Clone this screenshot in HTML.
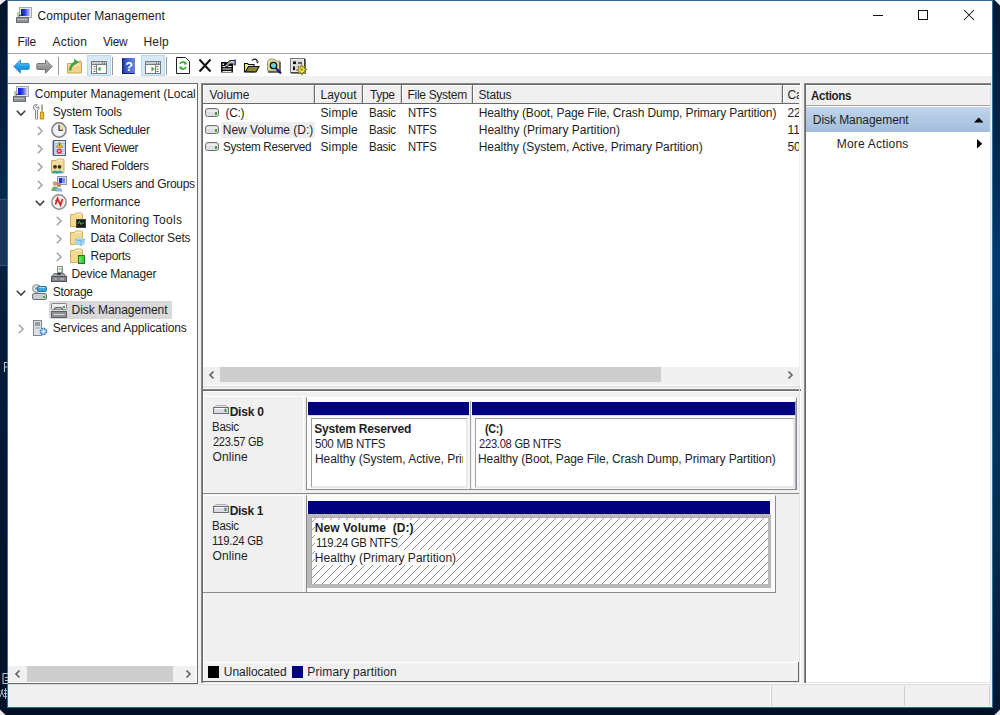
<!DOCTYPE html>
<html><head><meta charset="utf-8"><style>*{margin:0;padding:0;box-sizing:border-box}
html,body{width:1000px;height:715px;overflow:hidden;background:#011127;font-family:"Liberation Sans",sans-serif;font-size:12px;color:#000}
.a{position:absolute}
svg.a{overflow:visible}
.t{position:absolute;white-space:nowrap;line-height:14px;letter-spacing:-0.3px;color:#1e1e1e}
.b{font-weight:bold}
</style></head><body>
<div class="a" style="left:7px;top:0px;width:986px;height:708px;background:#fff;border:1px solid #2c6e9c"></div>
<svg class="a" style="left:0px;top:0px" width="7" height="6" viewBox="0 0 7 6"><path d="M0 0h6L0 5z" fill="#e8edf2"/></svg>
<svg class="a" style="left:993px;top:0px" width="7" height="7" viewBox="0 0 7 7"><path d="M1.5 0H7v5.5z" fill="#e8edf2"/></svg>
<svg class="a" style="left:993px;top:708px" width="7" height="7" viewBox="0 0 7 7"><path d="M7 1.5V7H1.5z" fill="#e8edf2"/></svg>
<svg class="a" style="left:0px;top:708px" width="7" height="7" viewBox="0 0 7 7"><path d="M0 1.5L5.5 7H0z" fill="#e8edf2"/></svg>
<svg class="a" style="left:16px;top:7px" width="16" height="16" viewBox="0 0 16 16"><defs><linearGradient id="scr" x1="0" x2="1"><stop offset="0" stop-color="#0a1ccc"/><stop offset="0.45" stop-color="#2a40e0"/><stop offset="1" stop-color="#c8ccf4"/></linearGradient></defs><rect x="3.5" y="0.5" width="12" height="10" fill="#e4e4e8" stroke="#a8a8ac"/><rect x="5" y="2" width="9" height="7" fill="url(#scr)"/><path d="M2 9.5c1-1.5 3-1.5 5-1" stroke="#222" stroke-width="0.9" fill="none"/><rect x="1" y="5" width="2" height="4.5" fill="#a6d49a"/><rect x="0.5" y="10.5" width="12" height="5" fill="#8f9398" stroke="#6c7075"/><path d="M2 12.5h9" stroke="#d0d2d4" stroke-width="1" stroke-dasharray="1.5 0.8"/></svg>
<div class="t" style="left:37.50px;top:9px;letter-spacing:0.072px;color:#1a1a1a">Computer Management</div>
<div class="a" style="left:873px;top:15px;width:10px;height:1px;background:#111"></div>
<div class="a" style="left:918px;top:10px;width:10px;height:10px;border:1px solid #111"></div>
<svg class="a" style="left:963px;top:9px" width="12" height="12" viewBox="0 0 12 12"><path d="M1 1L11 11M11 1L1 11" stroke="#111" stroke-width="1.05"/></svg>
<div class="t" style="left:17.50px;top:35px;letter-spacing:-0.200px;">File</div>
<div class="t" style="left:52.50px;top:35px;letter-spacing:0.200px;">Action</div>
<div class="t" style="left:103.00px;top:35px;letter-spacing:-0.300px;transform:scaleX(0.9841);transform-origin:0px 0;">View</div>
<div class="t" style="left:143.40px;top:35px;letter-spacing:0.200px;">Help</div>
<div class="a" style="left:8px;top:53px;width:984px;height:1px;background:#a9a9a9"></div>
<div class="a" style="left:87px;top:55px;width:24px;height:21px;background:#d6e9f8;border:1px solid #b5d8f3"></div>
<div class="a" style="left:141px;top:55px;width:24px;height:21px;background:#d6e9f8;border:1px solid #b5d8f3"></div>
<div class="a" style="left:58px;top:57px;width:1px;height:18px;background:#9a9a9a"></div>
<div class="a" style="left:112px;top:57px;width:1px;height:18px;background:#9a9a9a"></div>
<div class="a" style="left:166px;top:57px;width:1px;height:18px;background:#9a9a9a"></div>
<svg class="a" style="left:13px;top:59px" width="17" height="15" viewBox="0 0 17 15"><defs><linearGradient id="ba" x1="0" y1="0" x2="0" y2="1"><stop offset="0" stop-color="#8ad8fa"/><stop offset="0.5" stop-color="#1e9ee8"/><stop offset="1" stop-color="#1580d0"/></linearGradient></defs><path d="M0.8 7.5L7.5 0.8v3.7h7.7a1 1 0 0 1 1 1v4a1 1 0 0 1-1 1H7.5v3.7z" fill="url(#ba)" stroke="#3a8ad0" stroke-width="0.9"/></svg>
<svg class="a" style="left:36px;top:59px" width="17" height="15" viewBox="0 0 17 15"><defs><linearGradient id="fa" x1="0" y1="0" x2="0" y2="1"><stop offset="0" stop-color="#c8c8c8"/><stop offset="0.5" stop-color="#9a9a9a"/><stop offset="1" stop-color="#858585"/></linearGradient></defs><path d="M16.2 7.5L9.5 0.8v3.7H1.8a1 1 0 0 0-1 1v4a1 1 0 0 0 1 1h7.7v3.7z" fill="url(#fa)" stroke="#6a6a6a" stroke-width="0.9"/></svg>
<svg class="a" style="left:67px;top:58px" width="16" height="17" viewBox="0 0 16 17"><path d="M0.5 5.5h5l1.5-1.5h7.5v11h-14z" fill="#f4d48a" stroke="#c9a650"/><path d="M1 7h13" stroke="#fff3c8" stroke-width="0.8"/><path d="M3 12.5c0.5-4 2.5-7 6-8" stroke="#3fa63f" stroke-width="2.4" fill="none"/><path d="M7 0.8l5 3.2-4.5 3z" fill="#3fa63f"/><path d="M12 3.5l2-1" stroke="#8a8a8a" stroke-width="0.8"/></svg>
<svg class="a" style="left:91px;top:61px" width="16" height="13" viewBox="0 0 16 13"><rect x="0.5" y="0.5" width="15" height="12" fill="#fff" stroke="#7a7a7a"/><rect x="1" y="1" width="14" height="2.5" fill="#c8c8c8"/><path d="M11 2.2h1M13 2.2h1" stroke="#555" stroke-width="1"/><path d="M1 3.5h14" stroke="#7a7a7a"/><path d="M2.5 5.5h2M2.5 8h2M2.5 10.5h2" stroke="#666"/><path d="M5.5 4v9" stroke="#7a7a7a"/><path d="M9.5 5.5v5l-3-2.5z" fill="#3aaa3a"/></svg>
<svg class="a" style="left:122px;top:58px" width="13" height="16" viewBox="0 0 13 16"><defs><linearGradient id="hg" x1="0" x2="1"><stop offset="0" stop-color="#1c2f9a"/><stop offset="0.3" stop-color="#3a56c8"/><stop offset="1" stop-color="#6a84e0"/></linearGradient></defs><rect x="0" y="0" width="13" height="16" fill="url(#hg)"/><path d="M0.5 0.5v15h12" stroke="#142070" fill="none"/><text x="7" y="12.5" font-size="12.5" font-family="Liberation Sans" fill="#fff" text-anchor="middle" font-weight="bold">?</text></svg>
<svg class="a" style="left:145px;top:61px" width="16" height="13" viewBox="0 0 16 13"><rect x="0.5" y="0.5" width="15" height="12" fill="#fff" stroke="#7a7a7a"/><rect x="1" y="1" width="14" height="2.5" fill="#c8c8c8"/><path d="M11 2.2h1M13 2.2h1" stroke="#555" stroke-width="1"/><path d="M1 3.5h14" stroke="#7a7a7a"/><path d="M11.5 5.5h2M11.5 8h2M11.5 10.5h2" stroke="#666"/><path d="M10.5 4v9" stroke="#7a7a7a"/><path d="M6.5 5.5v5l3-2.5z" fill="#3aaa3a"/></svg>
<svg class="a" style="left:176px;top:57px" width="14" height="17" viewBox="0 0 14 17"><path d="M0.5 0.5h9l4 4v12h-13z" fill="#fff" stroke="#222"/><path d="M4 7a3 3 0 0 1 5.5-0.5" stroke="#2eaa2e" stroke-width="1.6" fill="none"/><path d="M10.5 4.5v3h-3z" fill="#2eaa2e"/><path d="M10 10a3 3 0 0 1-5.5 0.5" stroke="#2eaa2e" stroke-width="1.6" fill="none"/><path d="M3.5 12.5v-3h3z" fill="#2eaa2e"/></svg>
<svg class="a" style="left:198px;top:58px" width="14" height="15" viewBox="0 0 14 15"><path d="M1.5 1.5L12.5 13.5M12.5 1.5L1.5 13.5" stroke="#111" stroke-width="2"/></svg>
<svg class="a" style="left:220px;top:58px" width="17" height="15" viewBox="0 0 17 15"><rect x="1" y="4" width="12" height="10.5" fill="#111"/><path d="M2.5 8.5h9M2.5 11h9M2.5 13.5h9" stroke="#e8e8e8" stroke-width="1.2"/><rect x="2.5" y="5.5" width="1.5" height="1.5" fill="#ddd"/><path d="M5 7.5L9.5 2.5h5.5v3.5H9.5L7 9z" fill="#c8c8c8" stroke="#111" stroke-width="0.9"/><path d="M6.5 7l4-4M8 8l3.5-3" stroke="#111" stroke-width="0.6"/><path d="M15 1.5v6" stroke="#3030a0" stroke-width="1.6"/><path d="M14.3 3v3" stroke="#9a9af0" stroke-width="0.8"/></svg>
<svg class="a" style="left:243px;top:58px" width="17" height="15" viewBox="0 0 17 15"><path d="M1.5 5.5h3l1 1h5.5v7.5h-9.5z" fill="#f0f080" stroke="#111" stroke-width="1.1"/><path d="M2.5 13.5l3-5h10.5l-3 5.5z" fill="#8a8a28" stroke="#111" stroke-width="1.1"/><path d="M9 2.5c1.5-2 4-2 5.5 0.5" stroke="#111" stroke-width="1.2" fill="none"/><path d="M13 3.5h3l-1.5 2z" fill="#111"/></svg>
<svg class="a" style="left:267px;top:58px" width="16" height="17" viewBox="0 0 16 17"><path d="M0.5 3.5l2-2.5h5l1 2h4.5v10h-12.5z" fill="#dcdc96" stroke="#8a8a6a" stroke-width="0.8"/><path d="M1 14h12.5" stroke="#111" stroke-width="1.2"/><path d="M13 4v10" stroke="#111" stroke-width="1"/><circle cx="6.5" cy="7.5" r="3.2" fill="#5fd6e0" stroke="#111" stroke-width="1.3"/><path d="M8.8 10l5.2 5.5" stroke="#1a1a80" stroke-width="2.2"/></svg>
<svg class="a" style="left:290px;top:58px" width="17" height="16" viewBox="0 0 17 16"><rect x="0.5" y="0.5" width="14" height="14" fill="#fff" stroke="#777"/><rect x="1.5" y="1.5" width="12" height="12" fill="#d8d8d8"/><rect x="3" y="3.5" width="3" height="2.5" fill="#111"/><path d="M8 5h4" stroke="#111" stroke-width="1.2"/><rect x="3" y="8.5" width="2" height="3.5" fill="#111"/><path d="M1 15h14V1" stroke="#111" stroke-width="1.2" fill="none"/><g transform="translate(11.5 11.5)"><path d="M0-5l1.2 2.6 2.6-1.2-0.9 2.7 2.7 0.9-2.6 1.2 1.2 2.6-2.7-0.9-1 2.8-1.2-2.6-2.6 1.2 0.9-2.7-2.7-0.9 2.6-1.2-1.2-2.6 2.7 0.9z" fill="#f0e040" stroke="#5a5a10" stroke-width="0.7"/><circle r="1.3" fill="#9a9a30"/></g></svg>
<div class="a" style="left:8px;top:76px;width:984px;height:7px;background:#f0f0f0"></div>
<div class="a" style="left:8px;top:83px;width:984px;height:624px;background:#f0f0f0"></div>
<div class="a" style="left:8px;top:83px;width:190px;height:601px;background:#fff"></div>
<div class="a" style="left:8px;top:83px;width:190px;height:1px;background:#696969"></div>
<div class="a" style="left:197px;top:83px;width:1px;height:601px;background:#696969"></div>
<div class="a" style="left:196px;top:84px;width:1px;height:598px;background:#fff"></div>
<div class="a" style="left:8px;top:683px;width:190px;height:1px;background:#696969"></div>
<div class="a" style="left:198px;top:83px;width:3px;height:601px;background:#f0f0f0"></div>
<div class="a" style="left:8px;top:666px;width:188px;height:16px;background:#f0f0f0"></div>
<div class="a" style="left:27px;top:666px;width:146px;height:16px;background:#cdcdcd"></div>
<svg class="a" style="left:13px;top:669px" width="10" height="10" viewBox="0 0 10 10"><path d="M6.5 1.5L3 5l3.5 3.5" stroke="#606060" stroke-width="1.6" fill="none"/></svg>
<svg class="a" style="left:183px;top:669px" width="10" height="10" viewBox="0 0 10 10"><path d="M3.5 1.5L7 5 3.5 8.5" stroke="#606060" stroke-width="1.6" fill="none"/></svg>
<div class="a" style="left:49px;top:301px;width:123px;height:18px;background:#d9d9d9"></div>
<svg class="a" style="left:13px;top:86px" width="16" height="16" viewBox="0 0 16 16"><defs><linearGradient id="scr" x1="0" x2="1"><stop offset="0" stop-color="#0a1ccc"/><stop offset="0.45" stop-color="#2a40e0"/><stop offset="1" stop-color="#c8ccf4"/></linearGradient></defs><rect x="3.5" y="0.5" width="12" height="10" fill="#e4e4e8" stroke="#a8a8ac"/><rect x="5" y="2" width="9" height="7" fill="url(#scr)"/><path d="M2 9.5c1-1.5 3-1.5 5-1" stroke="#222" stroke-width="0.9" fill="none"/><rect x="1" y="5" width="2" height="4.5" fill="#a6d49a"/><rect x="0.5" y="10.5" width="12" height="5" fill="#8f9398" stroke="#6c7075"/><path d="M2 12.5h9" stroke="#d0d2d4" stroke-width="1" stroke-dasharray="1.5 0.8"/></svg>
<div class="t" style="left:34.80px;top:87px;letter-spacing:-0.048px;">Computer Management (Local</div>
<svg class="a" style="left:16px;top:110px" width="10" height="6" viewBox="0 0 10 6"><path d="M0.8 0.8L5 5 9.2 0.8" stroke="#404040" stroke-width="1.6" fill="none"/></svg>
<svg class="a" style="left:32px;top:104px" width="16" height="16" viewBox="0 0 16 16"><path d="M1.5 3a2.8 2.8 0 0 1 3.5-2.6L3.6 2.6l1.2 1.3 2-1.2A2.8 2.8 0 0 1 5.5 6.2v8.3a1 1 0 0 1-2 0V6.2A2.8 2.8 0 0 1 1.5 3z" fill="#f0f0f0" stroke="#7a7a7a" stroke-width="0.9"/><path d="M10 0.5v7" stroke="#555" stroke-width="1"/><path d="M8.5 8h3l0.3 7h-3.6z" fill="#f2b21a" stroke="#a87a00" stroke-width="0.8"/><path d="M10 9v5" stroke="#ffd870" stroke-width="0.7"/></svg>
<div class="t" style="left:52.70px;top:105px;letter-spacing:-0.164px;">System Tools</div>
<svg class="a" style="left:37px;top:126px" width="6" height="10" viewBox="0 0 6 10"><path d="M0.8 0.8L5 5 0.8 9.2" stroke="#a6a6a6" stroke-width="1.6" fill="none"/></svg>
<svg class="a" style="left:51px;top:122px" width="16" height="16" viewBox="0 0 16 16"><circle cx="8" cy="8" r="7.2" fill="#dde2ea" stroke="#7c7c7c" stroke-width="1.4"/><circle cx="8" cy="8" r="5.7" fill="#eef1f6"/><path d="M8 2.5A5.5 5.5 0 0 1 13.5 8H8z" fill="#f2dca0"/><path d="M8 3v5.2h4" stroke="#222" stroke-width="1.1" fill="none"/></svg>
<div class="t" style="left:72.60px;top:123px;letter-spacing:-0.362px;">Task Scheduler</div>
<svg class="a" style="left:37px;top:144px" width="6" height="10" viewBox="0 0 6 10"><path d="M0.8 0.8L5 5 0.8 9.2" stroke="#a6a6a6" stroke-width="1.6" fill="none"/></svg>
<svg class="a" style="left:51px;top:140px" width="16" height="16" viewBox="0 0 16 16"><rect x="2.5" y="0.5" width="12" height="15" fill="#dbe3f2" stroke="#4f5f88"/><path d="M4 3.5h10M4 5.5h10M4 7.5h10M4 9.5h10M4 11.5h10M4 13.5h10" stroke="#9aaad0" stroke-width="0.7"/><path d="M1 2h2.5M1 4h2.5M1 6h2.5M1 8h2.5M1 10h2.5M1 12h2.5M1 14h2.5" stroke="#4f5f88" stroke-width="0.9"/><path d="M8.5 2l3 5h-6z" fill="#f4c81c" stroke="#a88400" stroke-width="0.6"/><path d="M8.5 3.5v2" stroke="#333" stroke-width="0.9"/><circle cx="8.3" cy="11" r="2.6" fill="#d8283c"/><path d="M7.2 9.9l2.2 2.2M9.4 9.9l-2.2 2.2" stroke="#fff" stroke-width="0.8"/></svg>
<div class="t" style="left:71.60px;top:141px;letter-spacing:-0.318px;">Event Viewer</div>
<svg class="a" style="left:37px;top:162px" width="6" height="10" viewBox="0 0 6 10"><path d="M0.8 0.8L5 5 0.8 9.2" stroke="#a6a6a6" stroke-width="1.6" fill="none"/></svg>
<svg class="a" style="left:51px;top:158px" width="16" height="16" viewBox="0 0 16 16"><path d="M0.5 2.5h5l1-1.5h5.5l1 1.5v12h-12.5z" fill="#f3dc9a" stroke="#c4a458" stroke-width="0.9"/><path d="M6 2.2h6" stroke="#fff5d8" stroke-width="0.8"/><circle cx="4" cy="8.8" r="1.9" fill="#3a3020"/><path d="M1 15.5a3 3 0 0 1 6 0z" fill="#2da87a"/><circle cx="8.5" cy="8.8" r="1.9" fill="#3a3020"/><path d="M5.5 15.5a3 3 0 0 1 6 0z" fill="#38a0b8"/></svg>
<div class="t" style="left:71.60px;top:159px;letter-spacing:-0.362px;">Shared Folders</div>
<svg class="a" style="left:37px;top:180px" width="6" height="10" viewBox="0 0 6 10"><path d="M0.8 0.8L5 5 0.8 9.2" stroke="#a6a6a6" stroke-width="1.6" fill="none"/></svg>
<svg class="a" style="left:51px;top:176px" width="16" height="16" viewBox="0 0 16 16"><rect x="6.5" y="0.5" width="9" height="8" fill="#d8dde6" stroke="#8f96a2"/><rect x="8" y="2" width="6" height="5" fill="#7a8ff0"/><path d="M8 2h3v5H8z" fill="#1f36c8"/><circle cx="4" cy="7.5" r="2.3" fill="#c99d72"/><path d="M0.5 14a3.5 3.5 0 0 1 7 0v1h-7z" fill="#6fb06a"/><circle cx="8" cy="9" r="2.3" fill="#b88b63"/><path d="M4.5 15.5a3.5 3.5 0 0 1 7 0z" fill="#8eb4d8"/></svg>
<div class="t" style="left:71.60px;top:177px;letter-spacing:-0.281px;">Local Users and Groups</div>
<svg class="a" style="left:35px;top:200px" width="10" height="6" viewBox="0 0 10 6"><path d="M0.8 0.8L5 5 9.2 0.8" stroke="#404040" stroke-width="1.6" fill="none"/></svg>
<svg class="a" style="left:51px;top:194px" width="16" height="16" viewBox="0 0 16 16"><circle cx="8" cy="8" r="7.2" fill="#f4f4f4" stroke="#8c8c8c" stroke-width="1.4"/><path d="M4.5 10.5L6.5 4.5 9.5 11 11.5 5" stroke="#d12b2b" stroke-width="1.8" fill="none"/><path d="M4 6.5h1M4 9h1" stroke="#555" stroke-width="0.7"/></svg>
<div class="t" style="left:71.60px;top:195px;letter-spacing:0.020px;">Performance</div>
<svg class="a" style="left:56px;top:216px" width="6" height="10" viewBox="0 0 6 10"><path d="M0.8 0.8L5 5 0.8 9.2" stroke="#a6a6a6" stroke-width="1.6" fill="none"/></svg>
<svg class="a" style="left:70px;top:212px" width="16" height="16" viewBox="0 0 16 16"><path d="M0.5 2.5h4l1-1.5h6l1 1v12.5h-12z" fill="#f6d98f" stroke="#c9a64f" stroke-width="0.9"/><path d="M5.5 2.2h6" stroke="#fff" stroke-width="0.8"/><rect x="6.5" y="7.5" width="9" height="8" fill="#1a1a1a" stroke="#444"/><path d="M8 12l1.5-2.5 1.5 3 1.5-1.5h1.5" stroke="#3ccf5a" stroke-width="0.9" fill="none"/></svg>
<div class="t" style="left:90.50px;top:213px;letter-spacing:0.287px;">Monitoring Tools</div>
<svg class="a" style="left:56px;top:234px" width="6" height="10" viewBox="0 0 6 10"><path d="M0.8 0.8L5 5 0.8 9.2" stroke="#a6a6a6" stroke-width="1.6" fill="none"/></svg>
<svg class="a" style="left:70px;top:230px" width="16" height="16" viewBox="0 0 16 16"><path d="M0.5 2.5h4l1-1.5h6l1 1v12.5h-12z" fill="#f6d98f" stroke="#c9a64f" stroke-width="0.9"/><path d="M5.5 2.2h6" stroke="#fff" stroke-width="0.8"/><path d="M5 9.5l4-2 6 1.5v5l-4 2-6-1.5z" fill="#a9d6ef"/><path d="M5 9.5l6 1.5 4-2M11 11v5" stroke="#5aa9d6" stroke-width="0.7" fill="none"/></svg>
<div class="t" style="left:90.50px;top:231px;letter-spacing:-0.183px;">Data Collector Sets</div>
<svg class="a" style="left:56px;top:252px" width="6" height="10" viewBox="0 0 6 10"><path d="M0.8 0.8L5 5 0.8 9.2" stroke="#a6a6a6" stroke-width="1.6" fill="none"/></svg>
<svg class="a" style="left:70px;top:248px" width="16" height="16" viewBox="0 0 16 16"><path d="M0.5 2.5h4l1-1.5h6l1 1v12.5h-12z" fill="#f6d98f" stroke="#c9a64f" stroke-width="0.9"/><path d="M5.5 2.2h6" stroke="#fff" stroke-width="0.8"/><rect x="8.5" y="7.5" width="6" height="8" fill="#3bd33b" stroke="#1f7a1f"/><path d="M10 9v5" stroke="#8ff08f" stroke-width="1.2"/></svg>
<div class="t" style="left:90.50px;top:249px;letter-spacing:-0.283px;">Reports</div>
<svg class="a" style="left:51px;top:266px" width="16" height="16" viewBox="0 0 16 16"><rect x="6.5" y="0.5" width="5" height="6" fill="#f0f0f0" stroke="#8a8a8a"/><path d="M8 4a1.5 1.5 0 0 1 3 0v2" stroke="#5cb85c" fill="none"/><path d="M3 7.5h10l2 3H1z" fill="#9ea3a8" stroke="#5d6166" stroke-width="0.8"/><rect x="0.5" y="10.5" width="15" height="5" fill="#7e8388" stroke="#53575c"/><path d="M3 13h3M9 13h4" stroke="#c8cbce"/><ellipse cx="8" cy="8" rx="2" ry="1" fill="#333"/></svg>
<div class="t" style="left:71.60px;top:267px;letter-spacing:-0.185px;">Device Manager</div>
<svg class="a" style="left:16px;top:290px" width="10" height="6" viewBox="0 0 10 6"><path d="M0.8 0.8L5 5 9.2 0.8" stroke="#404040" stroke-width="1.6" fill="none"/></svg>
<svg class="a" style="left:32px;top:284px" width="16" height="16" viewBox="0 0 16 16"><circle cx="4.5" cy="4.5" r="4" fill="#d6d8da" stroke="#8d9094"/><circle cx="4.5" cy="4.5" r="1" fill="#777"/><rect x="5.5" y="2.5" width="9" height="5" rx="1" fill="#3aa6dc" stroke="#1e78a8"/><path d="M7 3.5h6" stroke="#9fd9f3"/><rect x="0.5" y="9.5" width="14" height="6" rx="1.5" fill="#c9ccd0" stroke="#6e7277"/><rect x="11" y="12" width="2" height="2" fill="#3db03d"/></svg>
<div class="t" style="left:52.70px;top:285px;letter-spacing:-0.283px;">Storage</div>
<svg class="a" style="left:51px;top:302px" width="16" height="16" viewBox="0 0 16 16"><rect x="0.5" y="1.5" width="15" height="6" rx="1" fill="#e6e7e9" stroke="#85898e"/><path d="M3 3h10" stroke="#fff"/><path d="M3 6.5a5 1.5 0 0 1 9 0" stroke="#333" fill="none"/><rect x="12" y="4" width="2" height="2" fill="#40b040"/><rect x="0.5" y="9.5" width="15" height="6" fill="#8e9297" stroke="#5e6267"/><path d="M2.5 12.5h11" stroke="#d7d9db"/></svg>
<div class="t" style="left:71.60px;top:303px;letter-spacing:-0.057px;">Disk Management</div>
<svg class="a" style="left:18px;top:324px" width="6" height="10" viewBox="0 0 6 10"><path d="M0.8 0.8L5 5 0.8 9.2" stroke="#a6a6a6" stroke-width="1.6" fill="none"/></svg>
<svg class="a" style="left:32px;top:320px" width="16" height="16" viewBox="0 0 16 16"><rect x="1.5" y="0.5" width="8" height="15" fill="#dde0e4" stroke="#7f858c"/><path d="M3 3h5M3 5h5" stroke="#555"/><path d="M3 8h5" stroke="#9aa"/><circle cx="11.5" cy="11.5" r="3.2" fill="#8fc0ea" stroke="#3a7fc0" stroke-width="1.4" stroke-dasharray="1.5 1"/><circle cx="11.5" cy="11.5" r="1.2" fill="#fff"/></svg>
<div class="t" style="left:52.70px;top:321px;letter-spacing:-0.108px;">Services and Applications</div>
<div class="a" style="left:196px;top:84px;width:1px;height:582px;background:#fff"></div>
<div class="a" style="left:197px;top:83px;width:1px;height:601px;background:#696969"></div>
<div class="a" style="left:198px;top:83px;width:3px;height:601px;background:#f0f0f0"></div>
<div class="a" style="left:201px;top:83px;width:600px;height:600px;background:#f0f0f0"></div>
<div class="a" style="left:201px;top:83px;width:600px;height:2px;background:#696969"></div>
<div class="a" style="left:201px;top:83px;width:2px;height:600px;background:#696969"></div>
<div class="a" style="left:201px;top:83px;width:1px;height:600px;background:#8a8a8a"></div>
<div class="a" style="left:201px;top:83px;width:600px;height:1px;background:#8a8a8a"></div>
<div class="a" style="left:800px;top:83px;width:1px;height:600px;background:#fff"></div>
<div class="a" style="left:203px;top:85px;width:596px;height:282px;background:#fff"></div>
<div class="a" style="left:203px;top:85px;width:596px;height:18px;background:#f0f0f0;border-top:1px solid #fff;border-left:1px solid #fff"></div>
<div class="a" style="left:203px;top:103px;width:596px;height:1px;background:#696969"></div>
<div class="a" style="left:314px;top:85px;width:1px;height:18px;background:#696969"></div>
<div class="a" style="left:315px;top:85px;width:1px;height:18px;background:#fff"></div>
<div class="a" style="left:313px;top:86px;width:1px;height:17px;background:#d5d5d5"></div>
<div class="a" style="left:362px;top:85px;width:1px;height:18px;background:#696969"></div>
<div class="a" style="left:363px;top:85px;width:1px;height:18px;background:#fff"></div>
<div class="a" style="left:361px;top:86px;width:1px;height:17px;background:#d5d5d5"></div>
<div class="a" style="left:401px;top:85px;width:1px;height:18px;background:#696969"></div>
<div class="a" style="left:402px;top:85px;width:1px;height:18px;background:#fff"></div>
<div class="a" style="left:400px;top:86px;width:1px;height:17px;background:#d5d5d5"></div>
<div class="a" style="left:472px;top:85px;width:1px;height:18px;background:#696969"></div>
<div class="a" style="left:473px;top:85px;width:1px;height:18px;background:#fff"></div>
<div class="a" style="left:471px;top:86px;width:1px;height:17px;background:#d5d5d5"></div>
<div class="a" style="left:782px;top:85px;width:1px;height:18px;background:#696969"></div>
<div class="a" style="left:783px;top:85px;width:1px;height:18px;background:#fff"></div>
<div class="a" style="left:781px;top:86px;width:1px;height:17px;background:#d5d5d5"></div>
<div class="t" style="left:209.50px;top:88px;letter-spacing:0.000px;">Volume</div>
<div class="t" style="left:320.50px;top:88px;letter-spacing:0.000px;">Layout</div>
<div class="t" style="left:370.00px;top:88px;letter-spacing:-0.333px;">Type</div>
<div class="t" style="left:407.50px;top:88px;letter-spacing:-0.300px;">File System</div>
<div class="t" style="left:478.50px;top:88px;letter-spacing:-0.200px;">Status</div>
<div class="t" style="left:787.60px;top:88px;letter-spacing:-0.200px;">Capacity</div>
<div class="a" style="left:221px;top:122px;width:94px;height:16px;background:#eeeeee"></div>
<svg class="a" style="left:204px;top:108px" width="17" height="10" viewBox="0 0 17 10"><path d="M1.5 3a2.5 2.5 0 0 1 2.5-2.5h8a2.5 2.5 0 0 1 2.5 2.5v3.5a2 2 0 0 1-2 2h-9a2 2 0 0 1-2-2z" fill="#dedde4" stroke="#6e7074"/><path d="M3 3h10" stroke="#fafafa"/><rect x="11" y="4" width="2" height="3" fill="#3aa534"/></svg>
<div class="t" style="left:225.60px;top:106px;letter-spacing:-0.333px;">(C:)</div>
<div class="t" style="left:320.50px;top:106px;letter-spacing:0.120px;">Simple</div>
<div class="t" style="left:368.50px;top:106px;letter-spacing:-0.300px;transform:scaleX(0.9590);transform-origin:1px 0;">Basic</div>
<div class="t" style="left:407.70px;top:106px;letter-spacing:-0.300px;transform:scaleX(0.9416);transform-origin:1px 0;">NTFS</div>
<div class="t" style="left:478.70px;top:106px;letter-spacing:-0.104px;">Healthy (Boot, Page File, Crash Dump, Primary Partition)</div>
<div class="t" style="left:787.60px;top:106px;letter-spacing:-0.200px;">223</div>
<svg class="a" style="left:204px;top:125px" width="17" height="10" viewBox="0 0 17 10"><path d="M1.5 3a2.5 2.5 0 0 1 2.5-2.5h8a2.5 2.5 0 0 1 2.5 2.5v3.5a2 2 0 0 1-2 2h-9a2 2 0 0 1-2-2z" fill="#dedde4" stroke="#6e7074"/><path d="M3 3h10" stroke="#fafafa"/><rect x="11" y="4" width="2" height="3" fill="#3aa534"/></svg>
<div class="t" style="left:222.80px;top:123px;letter-spacing:-0.014px;">New Volume (D:)</div>
<div class="t" style="left:320.50px;top:123px;letter-spacing:0.120px;">Simple</div>
<div class="t" style="left:368.50px;top:123px;letter-spacing:-0.300px;transform:scaleX(0.9590);transform-origin:1px 0;">Basic</div>
<div class="t" style="left:407.70px;top:123px;letter-spacing:-0.300px;transform:scaleX(0.9416);transform-origin:1px 0;">NTFS</div>
<div class="t" style="left:478.70px;top:123px;letter-spacing:0.023px;">Healthy (Primary Partition)</div>
<div class="t" style="left:787.60px;top:123px;letter-spacing:-0.200px;">119</div>
<svg class="a" style="left:204px;top:142px" width="17" height="10" viewBox="0 0 17 10"><path d="M1.5 3a2.5 2.5 0 0 1 2.5-2.5h8a2.5 2.5 0 0 1 2.5 2.5v3.5a2 2 0 0 1-2 2h-9a2 2 0 0 1-2-2z" fill="#dedde4" stroke="#6e7074"/><path d="M3 3h10" stroke="#fafafa"/><rect x="11" y="4" width="2" height="3" fill="#3aa534"/></svg>
<div class="t" style="left:222.80px;top:140px;letter-spacing:-0.300px;transform:scaleX(0.9775);transform-origin:1px 0;">System Reserved</div>
<div class="t" style="left:320.50px;top:140px;letter-spacing:0.120px;">Simple</div>
<div class="t" style="left:368.50px;top:140px;letter-spacing:-0.300px;transform:scaleX(0.9590);transform-origin:1px 0;">Basic</div>
<div class="t" style="left:407.70px;top:140px;letter-spacing:-0.300px;transform:scaleX(0.9416);transform-origin:1px 0;">NTFS</div>
<div class="t" style="left:478.70px;top:140px;letter-spacing:-0.048px;">Healthy (System, Active, Primary Partition)</div>
<div class="t" style="left:787.60px;top:140px;letter-spacing:-0.200px;">500</div>
<div class="a" style="left:799px;top:85px;width:1px;height:282px;background:#f0f0f0"></div>
<div class="a" style="left:800px;top:83px;width:1px;height:600px;background:#fff"></div>
<div class="a" style="left:801px;top:83px;width:3px;height:600px;background:#f0f0f0"></div>
<div class="a" style="left:203px;top:367px;width:596px;height:15px;background:#f0f0f0"></div>
<div class="a" style="left:220px;top:367px;width:441px;height:15px;background:#cdcdcd"></div>
<svg class="a" style="left:207px;top:370px" width="10" height="10" viewBox="0 0 10 10"><path d="M6.5 1.5L3 5l3.5 3.5" stroke="#606060" stroke-width="1.6" fill="none"/></svg>
<svg class="a" style="left:785px;top:370px" width="10" height="10" viewBox="0 0 10 10"><path d="M3.5 1.5L7 5 3.5 8.5" stroke="#606060" stroke-width="1.6" fill="none"/></svg>
<div class="a" style="left:203px;top:382px;width:596px;height:7px;background:#f0f0f0"></div>
<div class="a" style="left:203px;top:385px;width:596px;height:1px;background:#fff"></div>
<div class="a" style="left:203px;top:386px;width:596px;height:1px;background:#dcdcdc"></div>
<div class="a" style="left:201px;top:389px;width:600px;height:2px;background:#696969"></div>
<div class="a" style="left:201px;top:389px;width:600px;height:1px;background:#8a8a8a"></div>
<div class="a" style="left:203px;top:391px;width:596px;height:1px;background:#fff"></div>
<div class="a" style="left:203px;top:391px;width:1px;height:290px;background:#fff"></div>
<div class="a" style="left:203px;top:396px;width:103px;height:97px;background:#f0f0f0;border-top:1px solid #fff;border-left:1px solid #fff"></div>
<div class="a" style="left:303px;top:397px;width:1px;height:96px;background:#fbfbfb"></div>
<svg class="a" style="left:213px;top:405px" width="16" height="9" viewBox="0 0 16 9"><path d="M3 0.5h10l2.5 2.5H0.5z" fill="#e6e6e6" stroke="#a8a8a8" stroke-width="0.9"/><rect x="0.5" y="2.5" width="15" height="6" fill="#dcd9e6" stroke="#6e6e6e"/><path d="M2 3.6h9" stroke="#fff" stroke-width="1"/><rect x="11.5" y="4" width="2" height="3" fill="#3c9c34"/></svg>
<div class="t" style="left:229.70px;top:405px;letter-spacing:-0.240px;font-weight:bold;">Disk 0</div>
<div class="t" style="left:211.50px;top:420px;letter-spacing:-0.300px;transform:scaleX(0.9590);transform-origin:1px 0;">Basic</div>
<div class="t" style="left:212.50px;top:435px;letter-spacing:-0.300px;transform:scaleX(0.9212);transform-origin:0px 0;">223.57 GB</div>
<div class="t" style="left:212.50px;top:450px;letter-spacing:0.100px;">Online</div>
<div class="a" style="left:203px;top:495px;width:103px;height:97px;background:#f0f0f0;border-top:1px solid #fff;border-left:1px solid #fff"></div>
<div class="a" style="left:303px;top:496px;width:1px;height:96px;background:#fbfbfb"></div>
<svg class="a" style="left:213px;top:504px" width="16" height="9" viewBox="0 0 16 9"><path d="M3 0.5h10l2.5 2.5H0.5z" fill="#e6e6e6" stroke="#a8a8a8" stroke-width="0.9"/><rect x="0.5" y="2.5" width="15" height="6" fill="#dcd9e6" stroke="#6e6e6e"/><path d="M2 3.6h9" stroke="#fff" stroke-width="1"/><rect x="11.5" y="4" width="2" height="3" fill="#3c9c34"/></svg>
<div class="t" style="left:229.70px;top:504px;letter-spacing:-0.320px;font-weight:bold;">Disk 1</div>
<div class="t" style="left:211.50px;top:519px;letter-spacing:-0.300px;transform:scaleX(0.9590);transform-origin:1px 0;">Basic</div>
<div class="t" style="left:211.50px;top:534px;letter-spacing:-0.300px;transform:scaleX(0.9468);transform-origin:1px 0;">119.24 GB</div>
<div class="t" style="left:212.50px;top:549px;letter-spacing:0.100px;">Online</div>
<div class="a" style="left:203px;top:493px;width:596px;height:1px;background:#8a8a8a"></div>
<div class="a" style="left:203px;top:592px;width:103px;height:1px;background:#8a8a8a"></div>
<div class="a" style="left:306px;top:397px;width:491px;height:93px;background:#fafafa;border-left:1px solid #8a8a8a;border-right:1px solid #8a8a8a;border-bottom:1px solid #8a8a8a;border-top:1px solid #fff"></div>
<div class="a" style="left:307px;top:398px;width:1px;height:91px;background:#fff"></div>
<div class="a" style="left:308px;top:402px;width:161px;height:13px;background:#000080"></div>
<div class="a" style="left:308px;top:415px;width:161px;height:1px;background:#d8d8f0"></div>
<div class="a" style="left:311px;top:418px;width:157px;height:70px;background:#fff;border-top:1px solid #a0a0a0;border-left:1px solid #a0a0a0;border-right:2px solid #e8e8e8;border-bottom:2px solid #e8e8e8"></div>
<div class="a" style="left:312px;top:419px;width:151px;height:62px;overflow:hidden">
<div class="t" style="left:2.30px;top:3px;letter-spacing:-0.214px;font-weight:bold;">System Reserved</div>
<div class="t" style="left:2.70px;top:18px;letter-spacing:-0.300px;transform:scaleX(0.9639);transform-origin:1px 0;">500 MB NTFS</div>
<div class="t" style="left:3.00px;top:33px;letter-spacing:-0.048px;">Healthy (System, Active, Primary Partition)</div>
</div>
<div class="a" style="left:469px;top:401px;width:3px;height:88px;background:#f4f4f4"></div>
<div class="a" style="left:470px;top:401px;width:1px;height:88px;background:#a0a0a0"></div>
<div class="a" style="left:472px;top:402px;width:323px;height:13px;background:#000080"></div>
<div class="a" style="left:472px;top:415px;width:323px;height:1px;background:#d8d8f0"></div>
<div class="a" style="left:475px;top:418px;width:320px;height:70px;background:#fff;border-top:1px solid #a0a0a0;border-left:1px solid #a0a0a0;border-right:2px solid #e8e8e8;border-bottom:2px solid #e8e8e8"></div>
<div class="a" style="left:476px;top:419px;width:314px;height:62px;overflow:hidden">
<div class="t" style="left:9.40px;top:3px;letter-spacing:-0.300px;transform:scaleX(0.9005);transform-origin:0px 0;font-weight:bold;">(C:)</div>
<div class="t" style="left:3.00px;top:18px;letter-spacing:-0.300px;transform:scaleX(0.9330);transform-origin:0px 0;">223.08 GB NTFS</div>
<div class="t" style="left:2.00px;top:33px;letter-spacing:-0.104px;">Healthy (Boot, Page File, Crash Dump, Primary Partition)</div>
</div>
<div class="a" style="left:795px;top:401px;width:1px;height:88px;background:#a6a6c8"></div>
<div class="a" style="left:306px;top:495px;width:470px;height:98px;background:#fafafa;border-left:1px solid #8a8a8a;border-right:1px solid #8a8a8a;border-bottom:1px solid #8a8a8a;border-top:1px solid #fff"></div>
<div class="a" style="left:308px;top:501px;width:462px;height:13px;background:#000080"></div>
<div class="a" style="left:307px;top:514px;width:464px;height:74px;background:#b9b9b9"></div>
<svg class="a" style="left:312px;top:518px" width="456" height="66" shape-rendering="crispEdges"><defs><pattern id="hp" x="4" y="0" width="8" height="8" patternUnits="userSpaceOnUse"><rect x="0" y="7" width="1" height="1" fill="#939393"/><rect x="1" y="6" width="1" height="1" fill="#939393"/><rect x="2" y="5" width="1" height="1" fill="#939393"/><rect x="3" y="4" width="1" height="1" fill="#939393"/><rect x="4" y="3" width="1" height="1" fill="#939393"/><rect x="5" y="2" width="1" height="1" fill="#939393"/><rect x="6" y="1" width="1" height="1" fill="#939393"/><rect x="7" y="0" width="1" height="1" fill="#939393"/></pattern></defs><rect width="100%" height="100%" fill="#fff"/><rect width="100%" height="100%" fill="url(#hp)"/></svg>
<div class="a" style="left:311px;top:517px;width:457px;height:1px;background:#a9a9a9"></div>
<div class="a" style="left:311px;top:517px;width:1px;height:67px;background:#a9a9a9"></div>
<div class="a" style="left:315px;top:520px;width:98px;height:15px;background:#fff"></div>
<div class="a" style="left:315px;top:535px;width:83px;height:15px;background:#fff"></div>
<div class="a" style="left:315px;top:550px;width:141px;height:15px;background:#fff"></div>
<div class="a" style="left:312px;top:518px;width:452px;height:62px;overflow:hidden">
<div class="t" style="left:2.80px;top:3px;letter-spacing:0.067px;font-weight:bold;">New Volume&nbsp; (D:)</div>
<div class="t" style="left:3.70px;top:18px;letter-spacing:-0.300px;transform:scaleX(0.9384);transform-origin:1px 0;">119.24 GB NTFS</div>
<div class="t" style="left:2.80px;top:33px;letter-spacing:0.023px;">Healthy (Primary Partition)</div>
</div>
<div class="a" style="left:203px;top:662px;width:596px;height:1px;background:#fff"></div>
<div class="a" style="left:203px;top:681px;width:596px;height:1px;background:#696969"></div>
<div class="a" style="left:798px;top:662px;width:1px;height:20px;background:#696969"></div>
<div class="a" style="left:799px;top:385px;width:1px;height:298px;background:#e3e3e3"></div>
<div class="a" style="left:203px;top:682px;width:597px;height:1px;background:#e3e3e3"></div>
<div class="a" style="left:208px;top:666px;width:11px;height:12px;background:#000"></div>
<div class="t" style="left:223.80px;top:665px;letter-spacing:-0.050px;">Unallocated</div>
<div class="a" style="left:292px;top:666px;width:11px;height:12px;background:#000080"></div>
<div class="t" style="left:307.30px;top:665px;letter-spacing:0.125px;">Primary partition</div>
<div class="a" style="left:804px;top:83px;width:188px;height:600px;background:#fff"></div>
<div class="a" style="left:804px;top:83px;width:187px;height:2px;background:#696969"></div>
<div class="a" style="left:804px;top:83px;width:2px;height:600px;background:#696969"></div>
<div class="a" style="left:804px;top:83px;width:187px;height:1px;background:#8a8a8a"></div>
<div class="a" style="left:804px;top:83px;width:1px;height:600px;background:#8a8a8a"></div>
<div class="a" style="left:991px;top:83px;width:1px;height:600px;background:#fff"></div>
<div class="a" style="left:990px;top:85px;width:1px;height:597px;background:#e3e3e3"></div>
<div class="a" style="left:806px;top:85px;width:184px;height:20px;background:#f0f0f0;border-top:1px solid #fff"></div>
<div class="a" style="left:806px;top:105px;width:184px;height:1px;background:#a0a0a0"></div>
<div class="a" style="left:806px;top:107px;width:184px;height:25px;background:linear-gradient(#c1d5ec,#a2bddd)"></div>
<div class="t" style="left:811.40px;top:89px;letter-spacing:-0.300px;transform:scaleX(0.9597);transform-origin:0px 0;font-weight:bold;">Actions</div>
<div class="t" style="left:812.80px;top:113px;letter-spacing:-0.057px;">Disk Management</div>
<svg class="a" style="left:974px;top:117px" width="10" height="6" viewBox="0 0 10 6"><path d="M0 5.5L4.75 0.5 9.5 5.5z" fill="#000"/></svg>
<div class="t" style="left:836.80px;top:137px;letter-spacing:0.200px;">More Actions</div>
<svg class="a" style="left:977px;top:139px" width="6" height="10" viewBox="0 0 6 10"><path d="M0 0L5.2 4.75 0 9.5z" fill="#000"/></svg>
<div class="a" style="left:806px;top:682px;width:185px;height:1px;background:#e3e3e3"></div>
<div class="a" style="left:804px;top:683px;width:188px;height:1px;background:#fff"></div>
<div class="a" style="left:198px;top:683px;width:606px;height:1px;background:#fff"></div>
<div class="a" style="left:8px;top:683px;width:190px;height:1px;background:#696969"></div>
<div class="a" style="left:8px;top:682px;width:188px;height:1px;background:#fff"></div>
<div class="a" style="left:8px;top:684px;width:984px;height:1px;background:#dadada"></div>
<div class="a" style="left:8px;top:685px;width:1px;height:21px;background:#d4fbff"></div>
<div class="a" style="left:770px;top:686px;width:1px;height:20px;background:#fff"></div>
<div class="a" style="left:771px;top:686px;width:1px;height:20px;background:#d0d0d0"></div>
<div class="a" style="left:904px;top:686px;width:1px;height:20px;background:#d0d0d0"></div>
<div class="a" style="left:989px;top:686px;width:1px;height:20px;background:#d0d0d0"></div>
<div class="a" style="left:8px;top:706px;width:984px;height:1px;background:#d4fbff"></div>
<div class="a" style="left:991px;top:83px;width:1px;height:624px;background:#d4fbff"></div>
<div class="a" style="left:0px;top:0px;width:7px;height:715px;background:linear-gradient(#03142c 0px,#04203f 120px,#062a4e 195px,#041c38 300px,#031733 500px,#021228 715px)"></div>
<div class="a" style="left:0px;top:199px;width:7px;height:67px;background:#173556;border-top:1px solid #34506e;border-bottom:1px solid #34506e"></div>
<div class="a" style="left:993px;top:0px;width:7px;height:715px;background:linear-gradient(#031a33 0px,#04264a 130px,#003a6e 260px,#00345f 420px,#062a4c 560px,#031630 715px)"></div>
<svg class="a" style="left:993px;top:0px" width="7" height="7" viewBox="0 0 7 7"><path d="M1.5 0H7v5.5z" fill="#e8edf2"/></svg>
<svg class="a" style="left:993px;top:708px" width="7" height="7" viewBox="0 0 7 7"><path d="M7 1.5V7H1.5z" fill="#e8edf2"/></svg>
<svg class="a" style="left:0px;top:0px" width="7" height="6" viewBox="0 0 7 6"><path d="M0 0h6L0 5z" fill="#e8edf2"/></svg>
<svg class="a" style="left:0px;top:708px" width="7" height="7" viewBox="0 0 7 7"><path d="M0 1.5L5.5 7H0z" fill="#e8edf2"/></svg>
<svg class="a" style="left:3px;top:361px" width="4" height="11" viewBox="0 0 4 11"><path d="M1.5 1v10M1.5 1.5h3M1.5 6h3" stroke="#b8c4d4" stroke-width="1.1"/></svg>
<svg class="a" style="left:1px;top:672px" width="7" height="13" viewBox="0 0 7 13"><path d="M2 1v11M2 1.5h5M4 5.5h3M4 8.5h3M2 11.5h5" stroke="#b4c0cc" stroke-width="1.1" fill="none"/></svg>
<svg class="a" style="left:0px;top:687px" width="7" height="13" viewBox="0 0 7 13"><path d="M0 10l3-8M1 3l3 7M5.5 1v11M4 3.5h3M4 6.5h3M4 9.5h3" stroke="#aab6c4" stroke-width="1" fill="none"/></svg>
</body></html>
